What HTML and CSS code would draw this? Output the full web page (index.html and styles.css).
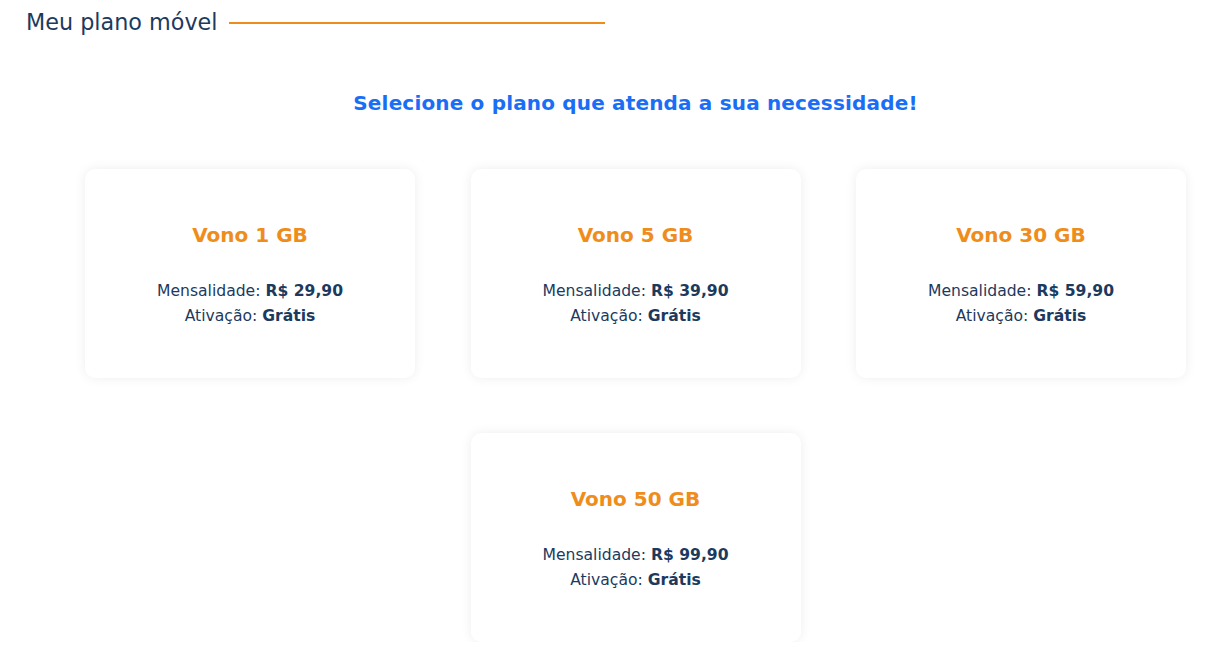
FILE: index.html
```html
<!DOCTYPE html>
<html lang="pt-BR">
<head>
<meta charset="utf-8">
<link rel="stylesheet" href="styles.css">
</head>
<body>
<div class="page">
  <div class="section-title">
    <span class="section-label">Meu plano móvel</span>
    <span class="section-line"></span>
  </div>
  <h2 class="headline">Selecione o plano que atenda a sua necessidade!</h2>
  <div class="plans">
    <div class="plan">
      <h3 class="plan-name">Vono 1 GB</h3>
      <p class="plan-info">Mensalidade: <b>R$ 29,90</b><br>Ativação: <b>Grátis</b></p>
    </div>
    <div class="plan">
      <h3 class="plan-name">Vono 5 GB</h3>
      <p class="plan-info">Mensalidade: <b>R$ 39,90</b><br>Ativação: <b>Grátis</b></p>
    </div>
    <div class="plan">
      <h3 class="plan-name">Vono 30 GB</h3>
      <p class="plan-info">Mensalidade: <b>R$ 59,90</b><br>Ativação: <b>Grátis</b></p>
    </div>
    <div class="plan plan-center">
      <h3 class="plan-name">Vono 50 GB</h3>
      <p class="plan-info">Mensalidade: <b>R$ 99,90</b><br>Ativação: <b>Grátis</b></p>
    </div>
  </div>
</div>
</body>
</html>
```
FILE: styles.css
```css
html, body {
  margin: 0;
  padding: 0;
  background: #ffffff;
}
body {
  font-family: "DejaVu Sans", "Open Sans", sans-serif;
  color: #1c3a5e;
}
.page {
  padding: 8px 0 0 26px;
}
.section-title {
  display: flex;
  align-items: center;
  gap: 11px;
  height: 28px;
}
.section-label {
  font-size: 22.3px;
  color: #1c3a5e;
}
.section-line {
  width: 376px;
  height: 2px;
  background: #ef8d1c;
  margin-top: 1px;
}
.headline {
  margin: 51px 0 0 59px;
  width: 1101px;
  text-align: center;
  font-size: 20px;
  letter-spacing: 0.17px;
  font-weight: 700;
  color: #1a6ef6;
  line-height: 32px;
}
.plans {
  margin: 50px 0 0 59px;
  width: 1101px;
  display: grid;
  grid-template-columns: repeat(3, 330px);
  column-gap: 55.5px;
  row-gap: 55px;
}
.plan {
  height: 209px;
  background: #ffffff;
  border-radius: 10px;
  box-shadow: 0 0 12px rgba(0, 0, 0, 0.07);
  display: flex;
  flex-direction: column;
  align-items: center;
  box-sizing: border-box;
  padding-top: 50px;
  text-align: center;
}
.plan-center {
  grid-column: 2;
}
.plan-name {
  margin: 0;
  font-size: 20px;
  font-weight: 700;
  color: #ef8d1c;
  line-height: 32px;
}
.plan-info {
  margin: 28px 0 0;
  font-size: 15.6px;
  line-height: 25px;
  color: #1c3a5e;
}
.plan-info b {
  font-weight: 700;
}
```
